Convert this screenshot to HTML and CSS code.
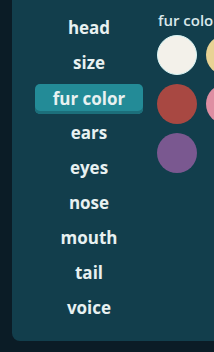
FILE: index.html
```html
<!DOCTYPE html>
<html lang="en">
<head>
    <meta charset="UTF-8">
    <title>Customize</title>
    <link rel="stylesheet" href="styles.css">
</head>
<body>
    <div class="panel">
        <ul class="parts">
            <li>head</li>
            <li>size</li>
            <li class="active">fur color</li>
            <li>ears</li>
            <li>eyes</li>
            <li>nose</li>
            <li>mouth</li>
            <li>tail</li>
            <li>voice</li>
        </ul>
        <div class="options">
            <h3>fur color</h3>
            <div class="swatches">
                <span class="swatch selected" style="background:#f3f1ea"></span>
                <span class="swatch" style="background:#e8d294"></span>
                <span class="swatch" style="background:#a84842"></span>
                <span class="swatch" style="background:#de8ea2"></span>
                <span class="swatch" style="background:#7a5890"></span>
            </div>
        </div>
    </div>
</body>
</html>
```
FILE: styles.css
```css
body {
    margin: 0;
    background-color: #0b1c26;
    font-family: "Open Sans", sans-serif;
    color: #e8f1f1;
    width: 214px;
    height: 352px;
    overflow: hidden;
}
.panel {
    margin-left: 12px;
    width: 240px;
    height: 341px;
    background-color: #123e4c;
    border-bottom-left-radius: 8px;
    display: flex;
    padding-left: 23px;
    box-sizing: border-box;
}
.parts {
    list-style: none;
    margin: 0;
    padding: 13px 0 0 0;
    width: 108px;
    display: flex;
    flex-direction: column;
    gap: 5px;
}
.parts li {
    height: 30px;
    line-height: 29px;
    text-align: center;
    font-size: 17px;
    font-weight: 700;
    border-radius: 5px;
}
.parts li.active {
    background-color: #238b97;
    box-shadow: inset 0 -3px 0 #1c6f7b;
    margin-top: 1px;
    margin-bottom: -1px;
}
.options {
    margin-left: 14px;
}
.options h3 {
    margin: 10px 0 5px 1px;
    font-size: 15px;
    font-weight: 600;
    color: #d9e8ea;
    white-space: nowrap;
    line-height: 20px;
}
.swatches {
    display: grid;
    grid-template-columns: 40px 40px;
    gap: 9px;
}
.swatch {
    width: 40px;
    height: 40px;
    border-radius: 50%;
    box-sizing: border-box;
}
.swatch.selected {
    border: 1px solid #d6f4f4;
}
```
